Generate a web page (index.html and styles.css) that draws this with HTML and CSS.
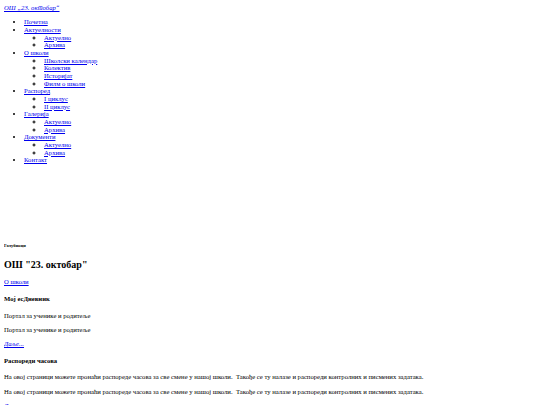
FILE: index.html
```html
<!DOCTYPE html>
<html lang="sr">
<head>
<meta charset="utf-8">
<title>ОШ "23. октобар"</title>
<link rel="stylesheet" href="styles.css">
</head>
<body class="page">
<div class="site-title"><a href="#" class="link"><em>ОШ „23. октобар“</em></a></div>
<ul class="menu">
  <li><a href="#" class="link">Почетна</a></li>
  <li><a href="#" class="link">Актуелности</a>
    <ul class="submenu">
      <li><a href="#" class="link">Актуелно</a></li>
      <li><a href="#" class="link">Архива</a></li>
    </ul>
  </li>
  <li><a href="#" class="link">О школи</a>
    <ul class="submenu">
      <li><a href="#" class="link">Школски календар</a></li>
      <li><a href="#" class="link">Колектив</a></li>
      <li><a href="#" class="link">Историјат</a></li>
      <li><a href="#" class="link">Филм о школи</a></li>
    </ul>
  </li>
  <li><a href="#" class="link">Распоред</a>
    <ul class="submenu">
      <li><a href="#" class="link">I циклус</a></li>
      <li><a href="#" class="link">II циклус</a></li>
    </ul>
  </li>
  <li><a href="#" class="link">Галерија</a>
    <ul class="submenu">
      <li><a href="#" class="link">Актуелно</a></li>
      <li><a href="#" class="link">Архива</a></li>
    </ul>
  </li>
  <li><a href="#" class="link">Документи</a>
    <ul class="submenu">
      <li><a href="#" class="link">Актуелно</a></li>
      <li><a href="#" class="link">Архива</a></li>
    </ul>
  </li>
  <li><a href="#" class="link">Контакт</a></li>
</ul>
<div class="banner"></div>
<h6 class="place">Голубинци</h6>
<h2 class="school">ОШ "23. октобар"</h2>
<a href="#" class="link">О школи</a>
<h4 class="section-title">Мој есДневник</h4>
<p class="text">Портал за ученике и родитеље</p>
<p class="text">Портал за ученике и родитеље</p>
<a href="#" class="link"><em>Даље...</em></a>
<h4 class="section-title">Распореди часова</h4>
<p class="text">На овој страници можете пронаћи распореде часова за све смене у нашој школи.&nbsp; Такође се ту налазе и распореди контролних и писмених задатака.</p>
<p class="text">На овој страници можете пронаћи распореде часова за све смене у нашој школи.&nbsp; Такође се ту налазе и распореди контролних и писмених задатака.</p>
<a href="#" class="link"><em>Даље...</em></a>
</body>
</html>
```

FILE: styles.css
```css
html {
  background: #ffffff;
}
.page {
  margin: 4px;
  font-family: "Liberation Serif", "Times New Roman", serif;
  font-size: 6.67px;
  line-height: 1.15;
  color: #000000;
}
.link {
  color: #0000ee;
  text-decoration: underline;
}
.menu {
  margin: 6.67px 0;
  padding-left: 20px;
  list-style: disc;
}
.submenu {
  margin: 0;
  padding-left: 20px;
  list-style: circle;
}
.banner {
  height: 62px;
}
.place {
  font-size: 0.67em;
  margin: 2.33em 0;
  font-weight: bold;
}
.school {
  font-size: 1.5em;
  margin: 0.83em 0;
  font-weight: bold;
}
.section-title {
  font-size: 1em;
  margin: 1.33em 0;
  font-weight: bold;
}
.text {
  margin: 1em 0;
}
```
